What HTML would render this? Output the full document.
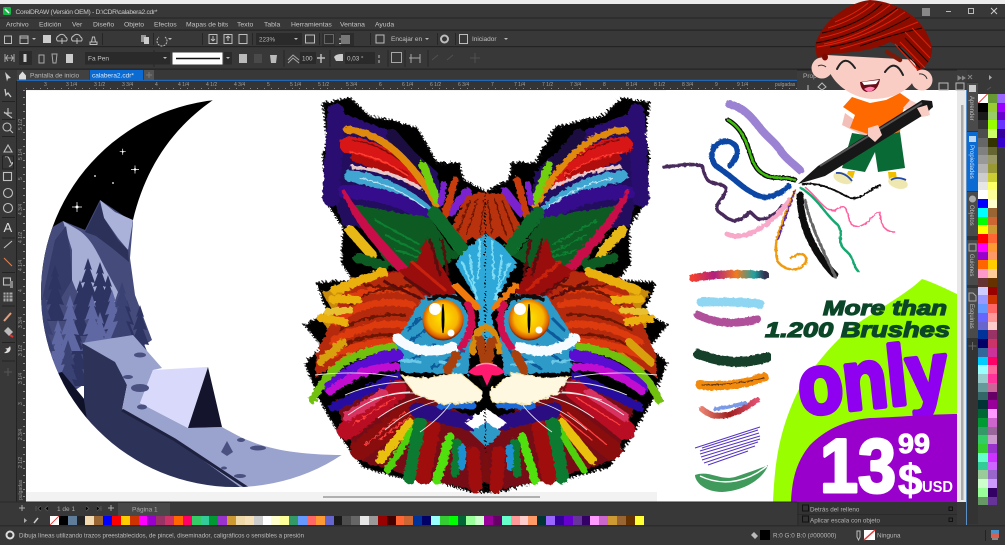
<!DOCTYPE html>
<html lang="es"><head><meta charset="utf-8"><title>CorelDRAW</title>
<style>
html,body{margin:0;padding:0;background:#383838;overflow:hidden}
#p{position:relative;width:1005px;height:545px;overflow:hidden;background:#383838;font-family:"Liberation Sans",sans-serif;filter:blur(.3px)}
.c{position:absolute;display:flex;flex-direction:column}
.c i{display:block;width:9.6px;height:8.75px;flex:none}
.r{position:absolute;display:flex;left:50px;top:516px;height:9px}
.r i{display:block;width:8.87px;height:9px;flex:none}
svg{position:absolute;left:0;top:0}
text{font-family:"Liberation Sans",sans-serif}
</style></head><body><div id="p">
<div class="c" style="left:978px;top:94px">
<i style="background:linear-gradient(135deg,#fff 45%,#e33 48%,#e33 52%,#fff 55%)"></i><i style="background:#000"></i><i style="background:#1a1a1a"></i><i style="background:#333"></i><i style="background:#4d4d4d"></i><i style="background:#666"></i><i style="background:#808080"></i><i style="background:#999"></i><i style="background:#b3b3b3"></i><i style="background:#ccc"></i><i style="background:#e6e6e6"></i><i style="background:#fff"></i><i style="background:#00f"></i><i style="background:#0ff"></i><i style="background:#0f0"></i><i style="background:#ff0"></i><i style="background:#f00"></i><i style="background:#f0f"></i><i style="background:#90c"></i><i style="background:#f60"></i><i style="background:#f9c"></i><i style="background:#633"></i><i style="background:#ccf"></i><i style="background:#99f"></i><i style="background:#69f"></i><i style="background:#66f"></i><i style="background:#66c"></i><i style="background:#039"></i><i style="background:#006"></i><i style="background:#369"></i><i style="background:#0cf"></i><i style="background:#9ff"></i><i style="background:#9cc"></i><i style="background:#699"></i><i style="background:#366"></i><i style="background:#033"></i><i style="background:#063"></i><i style="background:#093"></i><i style="background:#396"></i><i style="background:#3c6"></i><i style="background:#3c3"></i><i style="background:#6fc"></i><i style="background:#3c9"></i><i style="background:#9c9"></i><i style="background:#cfc"></i><i style="background:#9f9"></i><i style="background:#696"></i>
</div>
<div class="c" style="left:987.6px;top:94px">
<i style="background:#693"></i><i style="background:#9c3"></i><i style="background:#9c6"></i><i style="background:#9f0"></i><i style="background:#cf6"></i><i style="background:#330"></i><i style="background:#663"></i><i style="background:#996"></i><i style="background:#993"></i><i style="background:#cc3"></i><i style="background:#ff6"></i><i style="background:#ff9"></i><i style="background:#ffc"></i><i style="background:#963"></i><i style="background:#c63"></i><i style="background:#c93"></i><i style="background:#f63"></i><i style="background:#f93"></i><i style="background:#f96"></i><i style="background:#fc0"></i><i style="background:#fc9"></i><i style="background:#630"></i><i style="background:#900"></i><i style="background:#c30"></i><i style="background:#f66"></i><i style="background:#f99"></i><i style="background:#fcc"></i><i style="background:#936"></i><i style="background:#c36"></i><i style="background:#c39"></i><i style="background:#f06"></i><i style="background:#f69"></i><i style="background:#f39"></i><i style="background:#c69"></i><i style="background:#606"></i><i style="background:#909"></i><i style="background:#f9f"></i><i style="background:#c6c"></i><i style="background:#969"></i><i style="background:#c9c"></i><i style="background:#93c"></i><i style="background:#c3f"></i><i style="background:#c6f"></i><i style="background:#96c"></i><i style="background:#c9f"></i><i style="background:#306"></i><i style="background:#639"></i>
</div>
<div class="c" style="left:996.5px;top:94px">
<i style="background:#96f"></i><i style="background:#90f"></i><i style="background:#60c"></i><i style="background:#63f"></i><i style="background:#309"></i><i style="background:#30c"></i>
</div>
<div class="r">
<i style="background:linear-gradient(135deg,#fff 45%,#e33 48%,#e33 52%,#fff 55%)"></i><i style="background:#000"></i><i style="background:#5f7d9b"></i><i style="background:#222"></i><i style="background:#f2d9b0"></i><i style="background:#963"></i><i style="background:#00f"></i><i style="background:#f00"></i><i style="background:#fc0"></i><i style="background:#c30"></i><i style="background:#f0f"></i><i style="background:#90c"></i><i style="background:#936"></i><i style="background:#c36"></i><i style="background:#f60"></i><i style="background:#f06"></i><i style="background:#3c6"></i><i style="background:#3c9"></i><i style="background:#093"></i><i style="background:#93c"></i><i style="background:#c93"></i><i style="background:#f0d9a8"></i><i style="background:#f5e0b8"></i><i style="background:#ccc"></i><i style="background:#fff"></i><i style="background:#ffc"></i><i style="background:#ff9"></i><i style="background:#396"></i><i style="background:#69f"></i><i style="background:#f66"></i><i style="background:#f93"></i><i style="background:#66c"></i><i style="background:#1a1a1a"></i><i style="background:#4d4d4d"></i><i style="background:#666"></i><i style="background:#e6e6e6"></i><i style="background:#999"></i><i style="background:#900"></i><i style="background:#400"></i><i style="background:#f63"></i><i style="background:#c63"></i><i style="background:#039"></i><i style="background:#006"></i><i style="background:#9ff"></i><i style="background:#3c3"></i><i style="background:#0f0"></i><i style="background:#063"></i><i style="background:#9f9"></i><i style="background:#cfc"></i><i style="background:#909"></i><i style="background:#606"></i><i style="background:#6fc"></i><i style="background:#f99"></i><i style="background:#fcc"></i><i style="background:#f96"></i><i style="background:#033"></i><i style="background:#96f"></i><i style="background:#309"></i><i style="background:#60c"></i><i style="background:#639"></i><i style="background:#306"></i><i style="background:#f9f"></i><i style="background:#c6c"></i><i style="background:#c93"></i><i style="background:#963"></i><i style="background:#630"></i><i style="background:#ff3"></i>
</div>
<svg width="1005" height="545" viewBox="0 0 1005 545" xmlns="http://www.w3.org/2000/svg">
<defs>
<filter id="fur" x="-5%" y="-5%" width="110%" height="110%"><feTurbulence type="fractalNoise" baseFrequency=".22 .28" numOctaves="2" seed="4"/><feDisplacementMap in="SourceGraphic" scale="5"/></filter>
<filter id="soft" x="-5%" y="-5%" width="110%" height="110%"><feTurbulence type="fractalNoise" baseFrequency=".3" numOctaves="2" seed="2"/><feDisplacementMap in="SourceGraphic" scale="2.5"/></filter>
<radialGradient id="eye" cx=".5" cy=".45" r=".55"><stop offset="0" stop-color="#ffe600"/><stop offset=".65" stop-color="#f8b400"/><stop offset=".88" stop-color="#d85a00"/><stop offset="1" stop-color="#6a1800"/></radialGradient>
<linearGradient id="rb" x1="0" x2="1"><stop offset="0" stop-color="#f04030"/><stop offset=".3" stop-color="#b02080"/><stop offset=".6" stop-color="#f07a20"/><stop offset=".85" stop-color="#20a0a0"/><stop offset="1" stop-color="#303050"/></linearGradient>
<linearGradient id="rd" x1="0" x2="1"><stop offset="0" stop-color="#e88070"/><stop offset=".5" stop-color="#a02020"/><stop offset="1" stop-color="#e05070"/></linearGradient>
<clipPath id="mc"><circle cx="235" cy="293" r="194"/></clipPath>
<path id="t" d="M0 0L-4 12-2 11-7 25-3 24-9 40-4 39-11 56H11L4 39 9 40 3 24 7 25 2 11 4 12Z"/>
</defs>
<!-- top strip and chrome lines -->
<rect width="1005" height="4" fill="#ececec"/>
<g fill="#232323"><rect y="17.5" width="1005" height="1"/><rect y="29.5" width="1005" height="1.2"/><rect y="46" width="1005" height="1.2"/><rect y="68.5" width="1005" height="1.2"/></g>
<!-- title -->
<rect x="3" y="7" width="8" height="8" rx="1.5" fill="#18b848"/><path d="M5 9l4 4" stroke="#fff" stroke-width="1.5"/>
<text x="15.500" y="14" font-size="6.7" fill="#c8c8c8" textLength="142">CorelDRAW (Versión OEM) - D:\CDR\calabera2.cdr*</text>
<rect x="922" y="8" width="8" height="8" fill="#888"/>
<path d="M946 11.500h5" stroke="#bbb"/><rect x="968.500" y="8.500" width="5" height="5" fill="none" stroke="#bbb"/><path d="M991 8l6 6m0-6l-6 6" stroke="#ccc"/>
<!-- menu -->
<g font-size="6.8" fill="#c4c4c4">
<text x="6" y="26.500">Archivo</text><text x="39" y="26.500">Edición</text><text x="72" y="26.500">Ver</text><text x="93" y="26.500">Diseño</text><text x="124" y="26.500">Objeto</text><text x="154" y="26.500">Efectos</text><text x="186" y="26.500">Mapas de bits</text><text x="237" y="26.500">Texto</text><text x="264" y="26.500">Tabla</text><text x="291" y="26.500">Herramientas</text><text x="340" y="26.500">Ventana</text><text x="375" y="26.500">Ayuda</text>
</g>
<!-- toolbar 1 -->
<g fill="none" stroke="#bdbdbd" stroke-width="1">
<rect x="4.500" y="36" width="7" height="7.500"/><path d="M20 36h8v7.500h-8zM20 38h8"/><path d="M90 42h7v2.500h-7zM91.500 42l1-5h2l1 5"/>
<path d="M57.500 41a3 3 0 0 1 1-5 4 4 0 0 1 7 1 2.500 2.500 0 0 1 1 4zM62 38v6"/><path d="M72.500 41a3 3 0 0 1 1-5 4 4 0 0 1 7 1 2.500 2.500 0 0 1 1 4zM77 38v6"/>
<path d="M165 37a5 5 0 1 1-6 0" stroke-dasharray="2 1"/><rect x="209" y="34.500" width="8" height="9"/><rect x="224" y="34.500" width="8" height="9"/><path d="M213 36v5m0 0l-2-2m2 2l2-2M228 41v-5m0 0l-2 2m2-2l2 2"/>
<rect x="239" y="34.500" width="8" height="9"/>
<rect x="305.500" y="35" width="9" height="8"/><rect x="324.500" y="34.500" width="9" height="9"/><path d="M339 43.500h9M339 39h9M344 34v9"/><rect x="376" y="35" width="8" height="8"/><circle cx="444.500" cy="39" r="3.500" stroke-width="2"/><rect x="459.500" y="34.500" width="8" height="9"/>
</g>
<rect x="43" y="35" width="8" height="8" fill="#ccc"/><rect x="141" y="35" width="5" height="7" fill="#999"/><rect x="144" y="37" width="5" height="7" fill="#ccc"/>
<rect x="341" y="33" width="13" height="13" fill="#2c2c2c"/><rect x="322" y="33" width="13" height="13" fill="#2c2c2c" opacity=".6"/>
<rect x="341" y="35" width="9" height="9" fill="#777"/>
<g fill="#bbb"><path d="M32 38h4l-2 2zM168 38h4l-2 2zM294 38h4l-2 2zM425 38h4l-2 2zM504 38h4l-2 2z"/></g>
<rect x="256" y="33" width="46" height="12" fill="#2a2a2a"/><text x="259" y="41.500" font-size="6.300" fill="#b8b8b8">223%</text><path d="M294 38h4l-2 2z" fill="#bbb"/>
<text x="391" y="41" font-size="6.500" fill="#c0c0c0">Encajar en</text><text x="472" y="41" font-size="6.500" fill="#c0c0c0">Iniciador</text>
<g stroke="#262626"><path d="M102.500 33v12M153.500 33v12M202.500 33v12M252.500 33v12M319.500 33v12M370.500 33v12M437.500 33v12M455.500 33v12M154 50v17M284 50v17M330 50v17M388 50v17M405 50v17M428 50v17"/></g>
<!-- toolbar 2 -->
<rect x="19" y="51" width="13" height="14" fill="#2b2b2b"/>
<g fill="none" stroke="#a8a8a8"><path d="M5 54v8M14 54v8M5 58h9M8 55l-2 3 2 3M11 55l2 3-2 3"/><path d="M39 55h5v8h-5zM52 54h5l-1 9h-3z"/><rect x="391.500" y="52.500" width="10" height="10"/><path d="M411 54v9M420 54v9M409 58h11"/><path d="M288 60l5-5 6 5M288 63l5-5 6 5"/></g>
<rect x="23.500" y="54" width="3" height="8" fill="#ccc"/><rect x="66" y="54" width="7" height="9" fill="#ccc"/>
<rect x="85" y="52" width="85" height="12.500" fill="#2a2a2a"/><text x="88" y="60.500" font-size="6.500" fill="#c4c4c4">Fa Pen</text><path d="M163 57h4l-2 2z" fill="#bbb"/>
<rect x="172.500" y="52.500" width="50" height="12" fill="#fff"/><path d="M176 58.500h44" stroke="#111" stroke-width="1.500"/><rect x="224" y="52" width="8" height="12.500" fill="#2a2a2a"/><path d="M226 57h4l-2 2z" fill="#bbb"/>
<path d="M239 54h8v9h-8z" fill="#bbb"/><rect x="254" y="54" width="8" height="9" fill="#4a4a4a"/><path d="M270 55h7l-1 8h-5z" fill="#bbb"/>
<rect x="300" y="52" width="16" height="12" fill="#2a2a2a"/><text x="302" y="60.500" font-size="6.300" fill="#c4c4c4">100</text><path d="M321 54v9M317 58h8" stroke="#bbb" stroke-width="1.500"/>
<path d="M334 57c2-3 6-3 9-3v7h-7z" fill="#ccc"/><rect x="345" y="52" width="30" height="12" fill="#2a2a2a"/><text x="347" y="60.500" font-size="6.300" fill="#c4c4c4">0,03 °</text><path d="M379 55v3M379 60v3" stroke="#bbb"/>
<path d="M432 60l6-5M447 60l6-5M475 53v10M470 58h10" stroke="#505050"/>
<!-- tabs -->
<rect x="17" y="70" width="72" height="10" fill="#414141"/><path d="M19 75.500l3.500-4 3.500 4v4h-7z" fill="#ddd"/><text x="30" y="77.500" font-size="6.500" fill="#b8b8b8">Pantalla de inicio</text>
<rect x="90" y="70" width="53" height="10" fill="#0b6bd3"/><text x="92" y="77.500" font-size="6.500" fill="#d8e8f8">calabera2.cdr*</text>
<rect x="144" y="70" width="10" height="10" fill="#555"/><path d="M149 72v6M146 75h6" stroke="#7a7a7a"/>
<rect x="17" y="79.800" width="780" height="1.300" fill="#2067b8"/>
<!-- ruler h -->
<rect x="16" y="81" width="781" height="9" fill="#343434"/>
<rect x="797" y="70" width="170" height="20" fill="#3c3c3c"/><rect x="797" y="69.500" width="160" height="1" fill="#222"/>
<text x="803" y="78" font-size="6.500" fill="#b0b0b0">Prop</text>
<line x1="26" y1="88.500" x2="797" y2="88.500" stroke="#8a8a8a" stroke-dasharray="1 6" />
<g font-size="5" fill="#a0a0a0">
<text x="44" y="86">3</text><text x="66" y="86">3 1/4</text><text x="94" y="86">3 1/2</text><text x="122" y="86">3 3/4</text><text x="155" y="86">4</text><text x="178" y="86">4 1/4</text><text x="206" y="86">4 1/2</text><text x="234" y="86">4 3/4</text><text x="267" y="86">5</text><text x="290" y="86">5 1/4</text><text x="318" y="86">5 1/2</text><text x="346" y="86">5 3/4</text><text x="379" y="86">6</text><text x="402" y="86">6 1/4</text><text x="430" y="86">6 1/2</text><text x="458" y="86">6 3/4</text><text x="491" y="86">7</text><text x="514" y="86">7 1/4</text><text x="542" y="86">7 1/2</text><text x="570" y="86">7 3/4</text><text x="603" y="86">8</text><text x="626" y="86">8 1/4</text><text x="654" y="86">8 1/2</text><text x="682" y="86">8 3/4</text><text x="715" y="86">9</text><text x="737" y="86">9 1/4</text><text x="775" y="86">pulgadas</text>
</g>
<!-- ruler v -->
<rect x="16" y="81" width="10" height="421" fill="#343434"/><line x1="24" y1="90" x2="24" y2="500" stroke="#8a8a8a" stroke-dasharray="1 6" stroke-width="2"/><rect x="16" y="81" width="1" height="421" fill="#222"/>
<g font-size="5" fill="#999">
<text transform="translate(22,130) rotate(-90)">5 1/2</text><text transform="translate(22,160) rotate(-90)">5 1/4</text><text transform="translate(22,180) rotate(-90)">5</text><text transform="translate(22,215) rotate(-90)">4 3/4</text><text transform="translate(22,243) rotate(-90)">4 1/2</text><text transform="translate(22,271) rotate(-90)">4 1/4</text><text transform="translate(22,292) rotate(-90)">4</text><text transform="translate(22,328) rotate(-90)">3 3/4</text><text transform="translate(22,356) rotate(-90)">3 1/2</text><text transform="translate(22,384) rotate(-90)">3 1/4</text><text transform="translate(22,405) rotate(-90)">3</text><text transform="translate(22,440) rotate(-90)">2 3/4</text><text transform="translate(22,468) rotate(-90)">2 1/2</text><text transform="translate(22,500) rotate(-90)">pulgadas</text>
</g>
<!-- left tools -->
<g fill="none" stroke="#c0c0c0" stroke-width="1.100">
<path d="M4 112l8 6M8 108v8M4 113h8"/><circle cx="7" cy="127" r="4"/><path d="M10 130l3 3"/><path d="M4 152l4-7 4 7z"/><path d="M5 157c5-3 5 8 7 6s-1 4-3 3"/><rect x="3.500" y="172.500" width="8" height="8"/><circle cx="8" cy="193" r="4.500"/><circle cx="8" cy="208" r="4.500"/><path d="M4 248l8-7"/><path d="M4 258l8 8" stroke="#e08050"/><rect x="3.500" y="278" width="7" height="7"/>
</g>
<path d="M5 72l6 6-3 .5-1 3z" fill="#ccc"/><path d="M5 89l1 6 2-2 3 4" fill="none" stroke="#ccc" stroke-width="1.300"/>
<text x="3.500" y="232" font-size="13" fill="#ddd">A</text>
<rect x="10" y="281" width="3" height="7" fill="#888"/>
<rect x="3.500" y="292.500" width="9" height="9" fill="#aaa"/><path d="M3.500 295h9M3.500 298h9M6 292.500v9M9 292.500v9" stroke="#444"/>
<path d="M4 321l7-8" stroke="#e0a080" stroke-width="2"/><path d="M4 331l4-4 5 5-4 4z" fill="#bbb"/><path d="M10 335l3 2" stroke="#d33" stroke-width="2"/>
<path d="M4 353c5 1 8-3 6-7-1 2-3 3-5 2 3 2 2 3-1 5z" fill="#ddd"/><path d="M8 368v8M4 372h8" stroke="#565656"/>
<rect x="2.500" y="156" width="11" height="13" fill="none" stroke="#222"/>
<g stroke="#232323"><path d="M2 101.500h13M2 119.500h13M2 136.500h13M2 217.500h13M2 238h13M2 272.500h13M2 306h13M2 342.500h13M2 361h13"/></g>
<!-- canvas -->
<rect x="26" y="90" width="931" height="412" fill="#fff"/>
<rect x="26" y="492" width="631" height="10" fill="#f2f2f2"/><rect x="26" y="90" width="640" height="1" fill="#f4f4f4"/>
<line x1="323" y1="497" x2="540" y2="497" stroke="#9a9a9a" stroke-width="1.500"/>
<!-- scrollbar + dockers -->
<rect x="957" y="90" width="9" height="412" fill="#e8e8e8"/><rect x="961" y="105" width="2.500" height="395" fill="#aaa"/><rect x="966" y="90" width="1" height="435" fill="#5a8fc8"/>
<rect x="967" y="82" width="11" height="442" fill="#333"/>
<rect x="967" y="83" width="11" height="48" fill="#4a4a4a"/><rect x="967" y="132" width="11" height="59" fill="#0b6bd3"/><rect x="967" y="192" width="11" height="44" fill="#4a4a4a"/><rect x="967" y="240" width="11" height="45" fill="#4a4a4a"/><rect x="967" y="288" width="11" height="50" fill="#4a4a4a"/>
<g font-size="6" fill="#bcbcbc"><text transform="translate(970,96) rotate(90)">Aprender</text><text transform="translate(970,145) rotate(90)" fill="#cfe2f8">Propiedades</text><text transform="translate(970,205) rotate(90)">Objetos</text><text transform="translate(970,254) rotate(90)">Guiones</text><text transform="translate(970,304) rotate(90)">Esquinas</text></g>
<rect x="969" y="85" width="7" height="7" fill="#ccc"/><rect x="969" y="136" width="7" height="6" fill="#bcd8f4"/><circle cx="972.500" cy="199" r="3.500" fill="#aaa"/><rect x="969" y="244" width="7" height="7" fill="none" stroke="#aaa"/><path d="M969 293h4l3 3v5h-7z" fill="none" stroke="#aaa"/><path d="M972.500 342v8M968.500 346h8" stroke="#666"/>
<path d="M958 76l3 2-3 2zM962 76l3 2-3 2M968 75l4 4m0-4l-4 4" stroke="#888" fill="#888"/>
<rect x="939" y="83" width="9" height="7" fill="none" stroke="#bbb"/><rect x="956" y="83" width="8" height="7" fill="none" stroke="#bbb"/>
<path d="M808 85v5M822 83l-4 4 4 3 4-3z" fill="none" stroke="#bbb"/>
<path d="M989 75l3 2.500-3 2.500z" fill="#aaa"/><path d="M987 90l4-3" stroke="#555"/>
<!-- moon -->
<g clip-path="url(#mc)">
<path d="M213 100C170 130 145 170 133 220L128 262 100 300H30V100Z" fill="#000"/>
<path d="M30 240L63 221 85 230 100 200 133 222 130 258 135 295 152 340 60 400 30 380Z" fill="#454c7c"/>
<path d="M63 221L75 228C90 236 96 250 105 268L118 292 112 310 80 300 72 280 72 250Z" fill="#a6aed6"/>
<path d="M100 200L115 212 133 220 128 250 118 238 104 218Z" fill="#aab2da"/>
<path d="M85 232L100 202 104 218 118 240 128 250 129 262 112 248 96 236Z" fill="#2b3158"/>
<path d="M55 240L66 226 70 250 72 280 60 300 42 300Z" fill="#353b68"/>
<g fill="#2e3462"><use href="#t" x="55" y="265"/><use href="#t" x="80" y="280"/><use href="#t" x="100" y="262"/><use href="#t" x="108" y="275"/><use href="#t" x="88" y="258"/><use href="#t" x="127" y="300"/><use href="#t" x="140" y="305"/><use href="#t" x="78" y="330"/></g>
<g fill="#5f68a2"><use href="#t" x="70" y="295"/><use href="#t" x="92" y="295"/><use href="#t" x="112" y="290"/><use href="#t" x="58" y="320"/><use href="#t" x="100" y="312"/></g>
<g fill="#3a4173"><use href="#t" x="44" y="295"/><use href="#t" x="122" y="282"/><use href="#t" x="68" y="340"/></g>
<path d="M30 380L62 372 85 400 90 440 40 420Z" fill="#0f1128"/>
<path d="M82 343L115 360 127 385 122 410 175 440 258 495H150L90 440 84 400 84 370Z" fill="#2d3259"/>
<path d="M82 343L133 335 162 368 153 370 140 403 188 428 222 427C245 440 270 455 345 455L350 500H258L175 440 122 410 127 385 115 362Z" fill="#9aa3cd"/>
<path d="M122 410L175 440 258 495" fill="none" stroke="#1e2240" stroke-width="3"/>
</g>
<path d="M153 370L208 367 188 428 140 403Z" fill="#d9d9fb"/><path d="M208 367L188 428 222 427Z" fill="#14152c"/>
<g fill="#4a5180"><ellipse cx="140" cy="355" rx="6" ry="2.500"/><ellipse cx="128" cy="377" rx="5" ry="2"/><ellipse cx="140" cy="388" rx="9" ry="4"/><ellipse cx="142" cy="407" rx="5" ry="2.500"/><path d="M227 441l-6 11 6 4 6-4z"/><ellipse cx="241" cy="440" rx="4" ry="2"/><ellipse cx="258" cy="448" rx="8" ry="2.500"/><ellipse cx="240" cy="476" rx="6" ry="2"/><ellipse cx="224" cy="468" rx="3" ry="1.500"/></g>
<g stroke="#fff" stroke-width=".7"><path d="M119.700 151.700h6M122.700 148.700v6M131 169.500h8M135 165.500v8M72 207h10M77 202v10"/></g>
<g fill="#fff"><circle cx="122.700" cy="151.700" r="1"/><circle cx="135" cy="169.500" r="1.200"/><circle cx="77" cy="207" r="1.500"/><circle cx="95" cy="176" r=".9"/><circle cx="113" cy="183" r=".9"/></g>
<!-- cat -->
<g filter="url(#fur)">
<g id="h">
<path d="M323 103L350 98 370 117 390 120 417 128 437 163 460 163 463 180 486 192V492L473 492 433 480 410 480 363 467 343 440 320 400 305 363 323 347 305 325 328 313 317 283 353 280 342 263 343 227 327 203 323 153 327 140Z" fill="#060606" stroke="#0a0a0a" stroke-width="3" stroke-dasharray="1.500 2"/>
<path d="M333 110L392 132 437 172 442 215 400 232 343 226 331 190Z" fill="#24105e"/>
<path d="M322 292L380 270 400 280 370 340 330 372 318 360 335 340 320 318 332 310Z" fill="#c88a10"/>
<path d="M335 400L400 378 440 402 486 425V482L473 490 410 476 363 462 345 430Z" fill="#760c14"/>
<g fill="none" stroke-linecap="round">
<path d="M336 112L331 198" stroke="#2a1070" stroke-width="17"/><path d="M345 122L392 140" stroke="#2a1070" stroke-width="15"/><path d="M392 135L418 165" stroke="#1a0a40" stroke-width="12"/>
<path d="M348 145Q380 148 414 178" stroke="#d81414" stroke-width="17"/><path d="M355 158L405 175" stroke="#b00c0c" stroke-width="8"/>
<path d="M352 140Q380 143 410 168" stroke="#7a0808" stroke-width="1.500"/><path d="M350 152Q380 156 408 176" stroke="#ff4030" stroke-width="1.500"/>
<path d="M347 130Q395 132 437 205" stroke="#e08a10" stroke-width="7"/>
<path d="M350 176Q395 182 430 214" stroke="#3fa5d0" stroke-width="12"/>
<path d="M352 167Q390 170 420 188" stroke="#e8c8c8" stroke-width="3.500"/>
<path d="M345 192Q395 192 428 218" stroke="#35108c" stroke-width="14"/>
<path d="M360 178Q395 185 425 208" stroke="#bde6f5" stroke-width="1.200"/>
<path d="M423 165L437 200" stroke="#6fd010" stroke-width="8"/><path d="M444 184L441 203" stroke="#7a20d0" stroke-width="6"/><path d="M467 192L451 212" stroke="#7a20d0" stroke-width="9"/><path d="M455 180L445 216" stroke="#c83a0a" stroke-width="7"/>
</g>
<path d="M355 205L430 218 452 250 466 252 440 268 405 274 385 262Z" fill="#0a5a22"/>
<path d="M375 220L420 245M385 235L425 255M395 250L435 262M435 222L455 250" stroke="#0e8030" stroke-width="2" fill="none"/>
<path d="M343 190C355 225 385 255 403 275L406 267C385 245 358 215 343 190Z" fill="#c8104a" stroke="#c8104a" stroke-width="3"/>
<path d="M486 192L468 195 452 225 458 250 472 237 480 242 486 232Z" fill="#b8330a"/>
<path d="M478 198L466 235M470 200L458 232M484 200L480 235" stroke="#6a1505" stroke-width="1.500" fill="none"/>
<g fill="none" stroke-linecap="round"><path d="M434 213L463 250" stroke="#0a6a2a" stroke-width="13"/><path d="M350 230L372 255" stroke="#e8b818" stroke-width="10"/><path d="M358 258L385 266" stroke="#0a5a22" stroke-width="10"/></g>
<path d="M486 234L470 245 455 263 473 293 480 315 476 342 486 348Z" fill="#2fa8d8"/>
<path d="M480 240L478 280M470 255L476 300M462 262L478 300" stroke="#7fdcf5" stroke-width="2" fill="none"/>
<path d="M425 238L450 280 457 296 425 302 380 292 352 278 400 270 418 260Z" fill="#9a1010"/>
<path d="M330 323L345 290 352 277 400 272 425 297 408 322 395 345 350 352 315 378 316 355Z" fill="#b52a0a"/>
<g fill="none" stroke-linecap="round">
<path d="M335 322Q370 295 412 305M332 342Q370 320 405 325M326 358Q365 340 395 342M345 300Q380 285 405 290" stroke="#dd3a0c" stroke-width="7"/>
<path d="M365 285Q390 290 415 285M350 305Q375 285 400 290M340 330Q370 312 405 315M335 350Q365 332 398 335" stroke="#6a1205" stroke-width="2.500"/>
<path d="M335 290L383 272" stroke="#eab010" stroke-width="9"/><path d="M332 299L358 300" stroke="#eab010" stroke-width="8"/><path d="M327 312L350 310" stroke="#e8c030" stroke-width="7"/><path d="M321 318L345 322" stroke="#eab010" stroke-width="8"/><path d="M321 362L343 342" stroke="#d8a010" stroke-width="8"/>
<path d="M430 240L440 275M442 240L448 275M405 278L430 295M385 282L420 298" stroke="#5a0a0a" stroke-width="3"/>
<path d="M412 262L445 290" stroke="#c82010" stroke-width="3"/>
</g>
<path d="M425 296L395 342 402 372 468 375 474 317 456 294Z" fill="#2f9ac8"/>
<path d="M428 300Q445 292 462 300L470 315" fill="none" stroke="#0a0a0a" stroke-width="4"/>
<g fill="none" stroke-linecap="round">
<path d="M405 345L425 330M412 360L435 345M432 368L455 355M450 370L462 350M408 330L420 318" stroke="#0e5a9a" stroke-width="3"/>
<path d="M398 360L420 362M440 362L460 365" stroke="#6ac8e8" stroke-width="3"/>
<path d="M397 338Q420 358 453 347" stroke="#f6fbff" stroke-width="10"/>
<path d="M456 286L477 307" stroke="#ef7a10" stroke-width="7"/>
<path d="M468 305Q478 325 461 347" stroke="#d01050" stroke-width="7"/>
<path d="M456 355L448 370" stroke="#a8400c" stroke-width="9"/>
<path d="M486 327Q474 330 473 352" stroke="#d88a10" stroke-width="6"/>
<path d="M480 340L484 360" stroke="#a8400c" stroke-width="9"/>
<path d="M313 400Q335 352 393 347" stroke="#6fc010" stroke-width="8"/>
<path d="M330 388Q355 362 397 355" stroke="#5a10d0" stroke-width="12"/>
<path d="M330 391Q365 365 397 367" stroke="#c010d0" stroke-width="8"/>
<path d="M333 407L397 376" stroke="#2510a0" stroke-width="9"/>
<path d="M347 430L397 390" stroke="#b81020" stroke-width="20"/><path d="M360 450L412 410" stroke="#8a1010" stroke-width="20"/><path d="M347 417L383 393" stroke="#d83060" stroke-width="9"/>
<path d="M352 425L395 398M365 445L405 412M380 440L415 412" stroke="#ff4040" stroke-width="1.200"/>
<path d="M380 460L410 423" stroke="#e8c010" stroke-width="9"/><path d="M388 470L417 423" stroke="#50d010" stroke-width="7"/><path d="M410 477L420 423" stroke="#0a7a30" stroke-width="14"/><path d="M423 477L433 427" stroke="#a01010" stroke-width="15"/><path d="M437 480L450 437" stroke="#50e010" stroke-width="9"/><path d="M455 473L457 443" stroke="#0a7a30" stroke-width="9"/><path d="M462 467L462 447" stroke="#1a90d0" stroke-width="7"/><path d="M476 487L473 453" stroke="#a01010" stroke-width="13"/>
<path d="M486 480L486 455" stroke="#7a0a0a" stroke-width="6"/>
<path d="M417 410L480 425" stroke="#2a0a80" stroke-width="15"/>
<path d="M440 405L472 405" stroke="#1a6ad8" stroke-width="8"/>
</g>
<path d="M402 376L425 378 460 373 483 392 480 402 443 404 415 394Z" fill="#fff8e0" stroke="#f0e0a0"/>
<path d="M486 408L465 423 486 438Z" fill="#fff"/><path d="M486 422L470 432 486 447Z" fill="#2f9ac8"/>
</g>
<use href="#h" transform="matrix(-1 0 0 1 972 0)"/>
</g>
<!-- eyes/nose -->
<g>
<circle cx="443" cy="320" r="20.500" fill="url(#eye)"/><circle cx="529" cy="320" r="20.500" fill="url(#eye)"/>
<path d="M443 304Q445 320 443 333Q441 320 443 304ZM529 304Q531 320 529 333Q527 320 529 304Z" fill="#000" stroke="#000"/>
<circle cx="435" cy="309" r="6" fill="#fff"/><circle cx="451" cy="333" r="3.500" fill="#fff"/><circle cx="520" cy="309" r="6" fill="#fff"/><circle cx="539" cy="330" r="3.500" fill="#fff"/>
<path d="M466 373L478 377 486 397 494 377 507 373 486 380Z" fill="#0a0a0a"/>
<path d="M468 372Q486 354 505 372Q498 377 492 375L487 386 482 375Q475 377 468 372Z" fill="#ff1a70"/><path d="M476 366Q486 361 497 366" fill="none" stroke="#ff90b8" stroke-width="1.500"/>
<path d="M486 387v20" stroke="#000" stroke-width="7"/>
<g fill="none" stroke="#e8e8e8" stroke-width=".9"><path d="M315 375Q360 370 398 377M345 395Q375 382 408 382M348 415Q380 392 410 392M370 400Q395 392 415 393M378 418Q400 402 425 396M385 430Q410 408 437 401M420 432Q440 418 450 404"/><path d="M657 375Q612 370 574 377M627 395Q597 382 564 382M624 415Q592 392 562 392M602 400Q577 392 557 393M594 418Q572 402 547 396M587 430Q562 408 535 401M552 432Q532 418 522 404"/></g>
</g>
<!-- upper brushes -->
<g fill="none" stroke-linecap="round" stroke-linejoin="round" filter="url(#soft)">
<path d="M729 104C745 108 752 118 760 128S775 142 780 150 795 165 800 170" stroke="#9b82d2" stroke-width="8" stroke-dasharray="9 .8"/>
<path d="M728 120C740 127 745 138 749 150S755 170 765 175 785 176 795 180" stroke="#111" stroke-width="5"/><path d="M728 120C740 127 745 138 749 150S755 170 765 175 785 176 795 180" stroke="#3fc010" stroke-width="2.500"/>
<path d="M730 166C738 155 742 145 727 141 712 140 708 158 716 166 735 178 745 192 762 197 775 198 785 190 789 186" stroke="#0c46a6" stroke-width="5.500"/>
<path d="M664 167C680 165 695 163 702 166 706 178 705 182 718 184 728 186 728 190 722 198 714 207 716 211 722 214 735 226 740 220 750 212 756 216 756 222 768 218 780 210 775 215 782 206" stroke="#4a2a5c" stroke-width="3.500"/>
<path d="M727 234C745 242 770 226 790 200" stroke="#f8a8c8" stroke-width="5"/>
<path d="M795 190C785 220 770 240 778 262 790 276 808 268 806 258 803 250 795 256 791 258" stroke="#f09a10" stroke-width="2.500"/><path d="M795 190L778 240" stroke="#5a2aa0" stroke-width="1.500"/>
<path d="M800 195C800 225 815 255 835 275" stroke="#111" stroke-width="7" stroke-dasharray="14 1"/><path d="M805 200C810 225 825 255 836 278" stroke="#666" stroke-width="3" stroke-dasharray="3 2"/>
<path d="M801 188C820 200 825 215 838 225 845 238 835 240 845 250 855 258 852 265 858 271" stroke="#18a870" stroke-width="2.500"/>
<path d="M806 188C820 200 825 212 835 210 850 200 845 215 852 225 865 232 875 210 880 212 880 225 885 232 895 232" stroke="#ff5f9f" stroke-width="1.500" stroke-dasharray="3 .7"/>
<path d="M802 184C820 182 835 190 850 198 862 200 868 190 880 185" stroke="#111" stroke-width="1.800"/>
</g>
<!-- lower brushes -->
<g fill="none" stroke-linecap="round" filter="url(#soft)">
<path d="M693 278Q730 272 765 275" stroke="url(#rb)" stroke-width="8"/>
<path d="M701 302Q730 301 760 304" stroke="#8fd6f2" stroke-width="9"/>
<path d="M698 315Q725 328 757 319" stroke="#b04f9a" stroke-width="8"/>
<path d="M698 354Q735 368 767 357" stroke="#133f2a" stroke-width="10"/>
<path d="M700 385Q735 388 764 377" stroke="#f28a10" stroke-width="9"/><path d="M702 385Q735 385 764 378" stroke="#5a3208" stroke-width="1"/>
<path d="M702 409Q720 426 757 400" stroke="url(#rd)" stroke-width="6"/><path d="M715 409Q730 407 745 403" stroke="#7a9ae8" stroke-width="4"/>
</g>
<g stroke="#5535c0" stroke-width="1.100" fill="none"><path d="M702 448L758 430M700 451L759 433M700 454L760 436M701 457L760 439M702 460L758 442M704 463L755 446M708 465L748 451M695 448L760 427"/></g>
<path d="M695 475C710 470 720 481 735 477 750 472 762 468 768 465 764 478 745 491 722 492 705 492 695 482 695 475Z" fill="#3f9a5c"/><path d="M700 476C725 488 750 480 767 466" fill="none" stroke="#fff" stroke-width="1.500"/>
<!-- banner -->
<path d="M773 502C775 470 776 435 800 387 815 365 835 340 855 325 880 308 905 295 922 279 935 283 948 290 957 294V502Z" fill="#99ff00"/>
<text transform="translate(801,415) rotate(-6)" font-size="84" font-weight="700" fill="#8f00f0" stroke="#8f00f0" stroke-width="5" stroke-linejoin="round" textLength="150" lengthAdjust="spacingAndGlyphs">only</text>
<path d="M791 502C792 480 796 462 810 445 825 430 845 420 870 418 900 417 935 414 957 414V502Z" fill="#9900cc"/>
<text x="823" y="315" font-size="20" font-weight="700" font-style="italic" fill="#0c4628" stroke="#0c4628" stroke-width="1.200" textLength="124" lengthAdjust="spacingAndGlyphs">More than</text>
<text x="765" y="337" font-size="21" font-weight="700" font-style="italic" fill="#0c4628" stroke="#0c4628" stroke-width="1.200" textLength="185" lengthAdjust="spacingAndGlyphs">1.200 Brushes</text>
<text x="820" y="492" font-size="76" font-weight="700" fill="#fff" stroke="#fff" stroke-width="3" stroke-linejoin="round" textLength="76" lengthAdjust="spacingAndGlyphs">13</text>
<text x="898" y="453" font-size="28" font-weight="700" fill="#fff" stroke="#fff" stroke-width="1" textLength="32" lengthAdjust="spacingAndGlyphs">99</text>
<text x="898" y="495" font-size="44" font-weight="700" fill="#fff" stroke="#fff" stroke-width=".8">$</text>
<text x="922" y="492" font-size="16" font-weight="700" fill="#fff" textLength="31" lengthAdjust="spacingAndGlyphs">USD</text>
<!-- boy -->
<circle cx="822" cy="68" r="10.500" fill="#f9cdc4"/><circle cx="922" cy="80" r="10.500" fill="#f9cdc4"/>
<path d="M818 66a7 7 0 0 1 8 1M919 74a7 7 0 0 1 8 5" fill="none" stroke="#333" stroke-width="1"/>
<path d="M826 55C825 80 850 98 872 99 900 99 920 85 919 60Z" fill="#f9cdc4"/>
<path d="M815 46C820 24 845 3 870 0 900 2 926 20 932 47 933 58 926 68 917 71 915 58 905 46 890 42 862 56 835 50 817 58Z" fill="#8c0d00"/>
<g fill="none" stroke-width="1"><path d="M820 38Q860 30 890 5M828 28Q855 20 875 3M817 47Q865 40 905 12M840 49Q880 38 918 22M824 44Q865 36 898 9M835 22Q855 14 868 3" stroke="#e02008"/><path d="M822 33Q860 25 882 4M816 43Q860 35 897 8M830 47Q870 40 910 17M860 46Q890 35 922 28" stroke="#1f0300"/><path d="M900 42L925 68M905 32L930 58M895 44L918 70M912 28L931 48" stroke="#e02008"/><path d="M905 38L928 62M898 46L920 68" stroke="#1f0300"/></g>
<ellipse cx="825" cy="57" rx="3" ry="3.500" fill="#7a0a00"/>
<g fill="none" stroke="#222" stroke-width="2" stroke-linecap="round"><path d="M837 69Q845 53 855 68"/><path d="M885 72Q895 58 903 75"/></g>
<path d="M887 52L900 60" stroke="#7a1a0a" stroke-width="4.500" stroke-linecap="round"/>
<path d="M860 82L880 79Q878 92 868 92 861 92 860 82Z" fill="#6a0c18"/><path d="M862 82L879 80 876 84 864 85Z" fill="#fff"/><path d="M864 89Q870 85 875 88 872 92 868 92Z" fill="#ff7fae"/>
<path d="M845 113L875 135 872 140 842 125Z" fill="#f2c0b8"/>
<path d="M843 107L852 97 870 103 886 100 900 93 910 100 903 110 900 132 877 137 850 128 855 115Z" fill="#ff6a00"/>
<path d="M910 100L930 110 928 116 918 117 903 108Z" fill="#f9cdc4"/>
<path d="M852 133L877 137 900 132 905 168 878 172 875 152 865 172 842 168Z" fill="#0a6a35"/>
<path d="M848 171h7l-2 7h-7zM888 172h8l1 8h-8z" fill="#f0c000"/>
<ellipse cx="843" cy="178" rx="10" ry="5.500" transform="rotate(20 843 178)" fill="#eee8b0"/><ellipse cx="898" cy="183" rx="10" ry="5.500" transform="rotate(15 898 183)" fill="#eee8b0"/>
<path d="M836 173Q845 172 852 181M891 180Q897 176 906 180" fill="none" stroke="#2248a8" stroke-width="1.800"/>
<path d="M798 184L818 166 922 100 932 101 933 107 925 114 825 176Z" fill="#171717"/><path d="M820 166L922 103" stroke="#555" stroke-width="2"/>
<path d="M868 128L878 125 882 135 875 142 868 136Z" fill="#f9cdc4"/><path d="M917 108L927 105 930 115 922 117Z" fill="#f9cdc4"/>
<!-- bottom -->
<g stroke="#aaa"><path d="M22 505v6M19 508h6M111 505v6M108 508h6"/></g>
<g stroke="#555"><path d="M36 506v5M41 506l-3 2.500 3 2.500M48 506l-3 2.500 3 2.500M86 506l3 2.500-3 2.500M97 506l3 2.500-3 2.500M101 506v5"/></g>
<text x="57" y="511" font-size="6.500" fill="#aaa">1 de 1</text>
<rect x="118" y="503" width="52" height="13" fill="#484848"/><text x="132" y="511.500" font-size="6.500" fill="#aaa">Página 1</text>
<rect x="0" y="501.500" width="797" height="1" fill="#2a2a2a"/>
<path d="M24 518l3 2.500-3 2.500z" fill="#aaa"/><path d="M34 523l4-5" stroke="#ccc" stroke-width="1.500"/>
<rect x="797" y="502" width="160" height="23" fill="#333"/><rect x="797" y="514" width="160" height=".8" fill="#292929"/><rect x="797.500" y="502" width="1" height="23" fill="#292929"/>
<rect x="802.500" y="505" width="6" height="6" fill="none" stroke="#111"/><rect x="802.500" y="516" width="6" height="6" fill="none" stroke="#111"/>
<text x="810" y="511.500" font-size="6.300" fill="#b4b4b4">Detrás del relleno</text><text x="810" y="522.500" font-size="6.300" fill="#b4b4b4">Aplicar escala con objeto</text>
<rect x="949" y="507" width="3.500" height="3.500" fill="none" stroke="#111"/><rect x="949" y="518" width="3.500" height="3.500" fill="none" stroke="#111"/>
<rect y="525" width="1005" height="1.500" fill="#2c2c2c"/><rect y="526.500" width="1005" height="18.500" fill="#383838"/>
<circle cx="10" cy="535" r="3.500" fill="none" stroke="#ddd" stroke-width="2"/>
<text x="19" y="537.500" font-size="6.500" fill="#bdbdbd" textLength="285" lengthAdjust="spacingAndGlyphs">Dibuja líneas utilizando trazos preestablecidos, de pincel, diseminador, caligráficos o sensibles a presión</text>
<path d="M751 535l3-3 4 4-3 3z" fill="#bbb"/><rect x="760" y="530" width="10" height="10" fill="#000"/><text x="773" y="537.500" font-size="6.300" fill="#b8b8b8">R:0 G:0 B:0 (#000000)</text>
<path d="M857 531h3v6l-1.500 3-1.500-3z" fill="none" stroke="#bbb"/><rect x="864" y="530" width="11" height="10" fill="#fff"/><path d="M864 540l11-10" stroke="#e33" stroke-width="1.500"/><text x="877" y="537.500" font-size="6.300" fill="#b8b8b8">Ninguna</text>
<rect x="985" y="530" width="1" height="11" fill="#222"/><rect x="991" y="530" width="8" height="4" fill="#4a90c8"/><rect x="991" y="534" width="8" height="4" fill="#d86050"/><rect x="992" y="538" width="6" height="2" fill="#888"/>
</svg>
</div></body></html>
